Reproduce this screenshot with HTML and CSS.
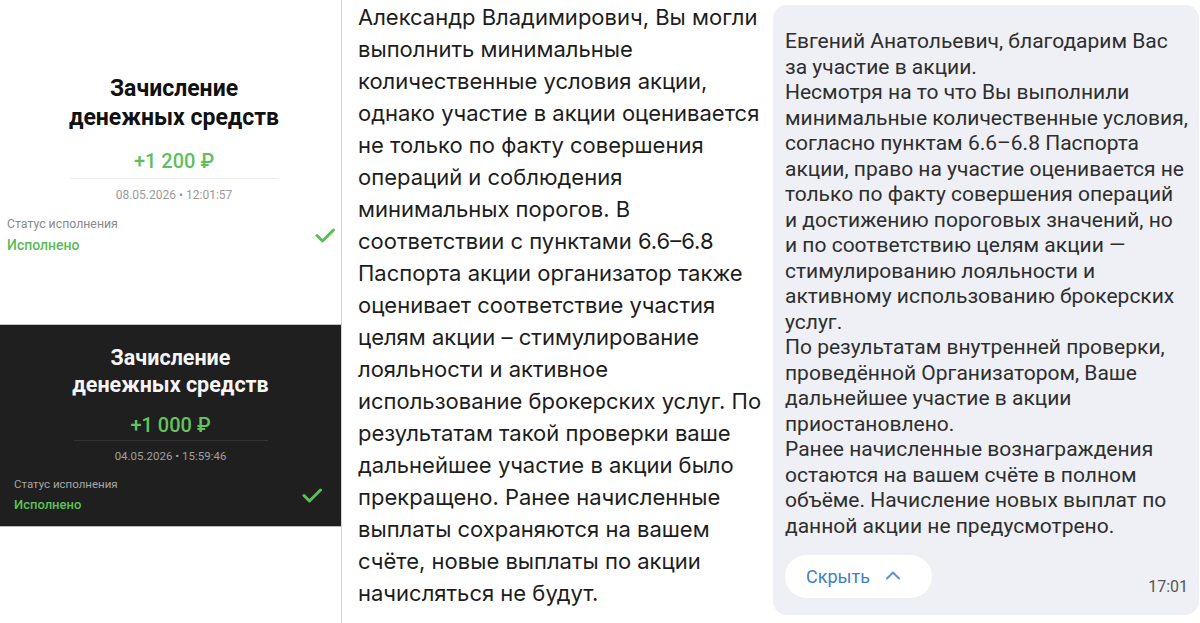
FILE: index.html
```html
<!DOCTYPE html>
<html lang="ru">
<head>
<meta charset="utf-8">
<title>Зачисление денежных средств</title>
<link rel="stylesheet" href="styles.css">
</head>
<body>
<div class="page">
  <aside class="ops">
    <section class="op op-light">
      <div class="op-head">
        <h2 class="op-title">Зачисление<br>денежных средств</h2>
        <div class="op-amount">+1 200 ₽</div>
        <div class="op-rule"></div>
        <div class="op-date">08.05.2026 • 12:01:57</div>
      </div>
      <div class="op-status">
        <div>
          <div class="op-label">Статус исполнения</div>
          <div class="op-value">Исполнено</div>
        </div>
        <svg class="check" viewBox="0 0 20 15" aria-hidden="true"><path d="M2 7.5 L7.5 13 L18.5 2"/></svg>
      </div>
    </section>
    <section class="op op-dark">
      <div class="op-head">
        <h2 class="op-title">Зачисление<br>денежных средств</h2>
        <div class="op-amount">+1 000 ₽</div>
        <div class="op-rule"></div>
        <div class="op-date">04.05.2026 • 15:59:46</div>
      </div>
      <div class="op-status">
        <div>
          <div class="op-label">Статус исполнения</div>
          <div class="op-value">Исполнено</div>
        </div>
        <svg class="check" viewBox="0 0 20 15" aria-hidden="true"><path d="M2 7.5 L7.5 13 L18.5 2"/></svg>
      </div>
    </section>
  </aside>

  <main class="letter">
    <p>Александр Владимирович, Вы могли<br>
    выполнить минимальные<br>
    количественные условия акции,<br>
    однако участие в акции оценивается<br>
    не только по факту совершения<br>
    операций и соблюдения<br>
    минимальных порогов. В<br>
    соответствии с пунктами 6.6–6.8<br>
    Паспорта акции организатор также<br>
    оценивает соответствие участия<br>
    целям акции – стимулирование<br>
    лояльности и активное<br>
    использование брокерских услуг. По<br>
    результатам такой проверки ваше<br>
    дальнейшее участие в акции было<br>
    прекращено. Ранее начисленные<br>
    выплаты сохраняются на вашем<br>
    счёте, новые выплаты по акции<br>
    начисляться не будут.</p>
  </main>

  <section class="chat">
    <div class="bubble">
      <p class="msg">Евгений Анатольевич, благодарим Вас<br>
      за участие в акции.<br>
      Несмотря на то что Вы выполнили<br>
      минимальные количественные условия,<br>
      согласно пунктам 6.6–6.8 Паспорта<br>
      акции, право на участие оценивается не<br>
      только по факту совершения операций<br>
      и достижению пороговых значений, но<br>
      и по соответствию целям акции —<br>
      стимулированию лояльности и<br>
      активному использованию брокерских<br>
      услуг.<br>
      По результатам внутренней проверки,<br>
      проведённой Организатором, Ваше<br>
      дальнейшее участие в акции<br>
      приостановлено.<br>
      Ранее начисленные вознаграждения<br>
      остаются на вашем счёте в полном<br>
      объёме. Начисление новых выплат по<br>
      данной акции не предусмотрено.</p>
      <div class="bubble-foot">
        <button class="hide" type="button">Скрыть
          <svg class="chev" viewBox="0 0 16 10" aria-hidden="true"><path d="M2 8.5 L8 2.5 L14 8.5"/></svg>
        </button>
        <span class="time">17:01</span>
      </div>
    </div>
  </section>
</div>
</body>
</html>
```

FILE: styles.css
```css
* { box-sizing: border-box; }
html, body { margin: 0; padding: 0; background: #fff; }
.page {
  display: flex;
  width: 1200px;
  height: 623px;
  overflow: hidden;
}

/* ---------- left column: operation cards ---------- */
.ops {
  width: 342px;
  flex: none;
  border-right: 1px solid #d2d2d2;
  display: flex;
  flex-direction: column;
  font-family: Roboto, "Liberation Sans", sans-serif;
}
.op { display: flex; flex-direction: column; }
.op-title {
  margin: 0;
  font-weight: 700;
  text-align: center;
}
.op-amount {
  text-align: center;
  font-weight: 500;
  color: #5fbf5c;
}
.op-rule { height: 1px; margin: 0 auto; }
.op-date { text-align: center; color: #9a9a9a; }
.op-status {
  display: flex;
  align-items: center;
  justify-content: space-between;
}
.op-value { font-weight: 500; color: #5bbb57; }
.check { fill: none; stroke: #5bbf57; stroke-width: 3; stroke-linecap: round; stroke-linejoin: round; }

.op-light {
  height: 325px;
  border-bottom: 1px solid #c4c4c4;
  padding: 74px 0 0 7px;
}
.op-light .op-title { font-size: 23px; line-height: 29px; color: #111; }
.op-light .op-amount { font-size: 20px; line-height: 24px; margin-top: 17px; }
.op-light .op-rule { width: 208px; background: #ececec; margin-top: 5px; }
.op-light .op-date { font-size: 12px; line-height: 16px; margin-top: 8px; }
.op-light .op-status { margin-top: 14px; padding-right: 6px; }
.op-light .op-label { font-size: 12.3px; line-height: 15px; color: #8a8a8a; }
.op-light .op-value { font-size: 14px; line-height: 18px; margin-top: 4px; }
.op-light .check { width: 20px; height: 15px; }

.op-dark {
  height: 202px;
  background: #1f1f1f;
  border-bottom: 1px solid #b8b8b8;
  padding: 19px 0 0 0;
}
.op-dark .op-title { font-size: 21.5px; line-height: 27px; color: #f5f5f5; }
.op-dark .op-amount { font-size: 20px; line-height: 22px; margin-top: 16px; color: #63c35e; }
.op-dark .op-rule { width: 194px; background: #333; margin-top: 4px; }
.op-dark .op-date { font-size: 11.5px; line-height: 15px; margin-top: 8px; color: #a0a0a0; }
.op-dark .op-status { margin-top: 13px; padding: 0 19px 0 14px; }
.op-dark .op-label { font-size: 11.5px; line-height: 14px; color: #a6a6a6; }
.op-dark .op-value { font-size: 13px; line-height: 17px; margin-top: 5px; color: #5cc257; }
.op-dark .check { width: 20px; height: 15px; }

/* ---------- middle column: letter ---------- */
.letter {
  width: 428px;
  flex: none;
  padding: 1px 0 0 16px;
  font-family: Inter, "Liberation Sans", sans-serif;
  font-size: 22px;
  line-height: 32px;
  color: #1d1d1d;
  white-space: nowrap;
}
.letter p { margin: 0; }

/* ---------- right column: chat bubble ---------- */
.chat {
  flex: 1;
  padding: 5px 1px 8px 3px;
}
.bubble {
  height: 610px;
  background: #eef0f5;
  border-radius: 14px;
  padding: 24px 11px 0 12px;
  display: flex;
  flex-direction: column;
}
.msg {
  margin: 0;
  font-family: Roboto, "Liberation Sans", sans-serif;
  font-size: 21px;
  line-height: 25.5px;
  color: #2e2e2e;
  white-space: nowrap;
}
.bubble-foot {
  display: flex;
  justify-content: space-between;
  align-items: flex-end;
  margin-top: 16px;
}
.hide {
  width: 147px;
  height: 43px;
  border: 0;
  border-radius: 22px;
  background: #fff;
  padding: 0 0 0 21px;
  display: flex;
  align-items: center;
  gap: 15px;
  font-family: Roboto, "Liberation Sans", sans-serif;
  font-size: 18px;
  color: #3f80c6;
}
.chev { width: 16px; height: 10px; margin-top: -3px; fill: none; stroke: #5a93cf; stroke-width: 2; stroke-linecap: round; stroke-linejoin: round; }
.time {
  font-family: Roboto, "Liberation Sans", sans-serif;
  font-size: 16px;
  line-height: 20px;
  color: #555;
  margin-bottom: 1px;
}
```
